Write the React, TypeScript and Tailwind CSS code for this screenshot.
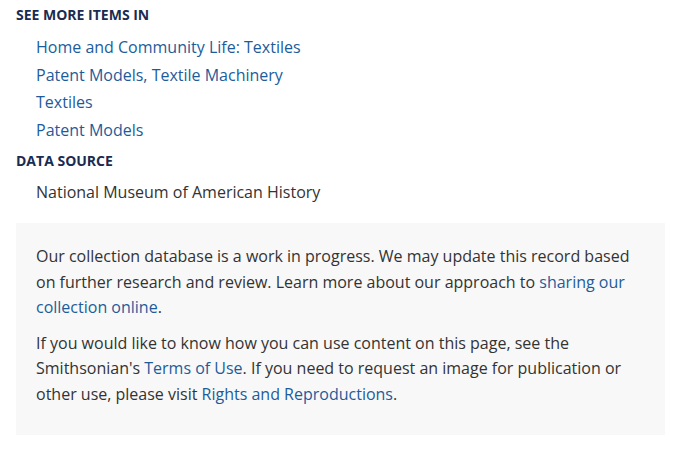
const links = [
  "Home and Community Life: Textiles",
  "Patent Models, Textile Machinery",
  "Textiles",
  "Patent Models",
];

const A = ({ children }: { children: React.ReactNode }) => (
  <a href="#" className="text-[#1d5c9b]">
    {children}
  </a>
);

export default function App() {
  return (
    <div className="min-h-[458px] bg-white px-4 pt-[5px] text-[16px] text-[#333] [font-family:'Open_Sans',sans-serif]">
      <h3 className="text-[14px] leading-[20px] font-bold uppercase text-[#1b2b50]">See more items in</h3>
      <ul className="mt-[9px] pl-5 leading-[27.5px]">
        {links.map((l) => (
          <li key={l}>
            <A>{l}</A>
          </li>
        ))}
      </ul>
      <h3 className="mt-[7px] text-[14px] leading-[20px] font-bold uppercase text-[#1b2b50]">Data source</h3>
      <p className="mt-[10px] pl-5 leading-[22px]">National Museum of American History</p>
      <div className="mt-[20px] w-[649px] bg-[#f8f8f8] px-5 pt-[21px] pb-[28px] leading-[25.5px]">
        <p>
          Our collection database is a work in progress. We may update this record based on further research and
          review. Learn more about our approach to <A>sharing our collection online</A>.
        </p>
        <p className="mt-[10px]">
          If you would like to know how you can use content on this page, see the Smithsonian's <A>Terms of Use</A>. If
          you need to request an image for publication or other use, please visit <A>Rights and Reproductions</A>.
        </p>
      </div>
    </div>
  );
}
